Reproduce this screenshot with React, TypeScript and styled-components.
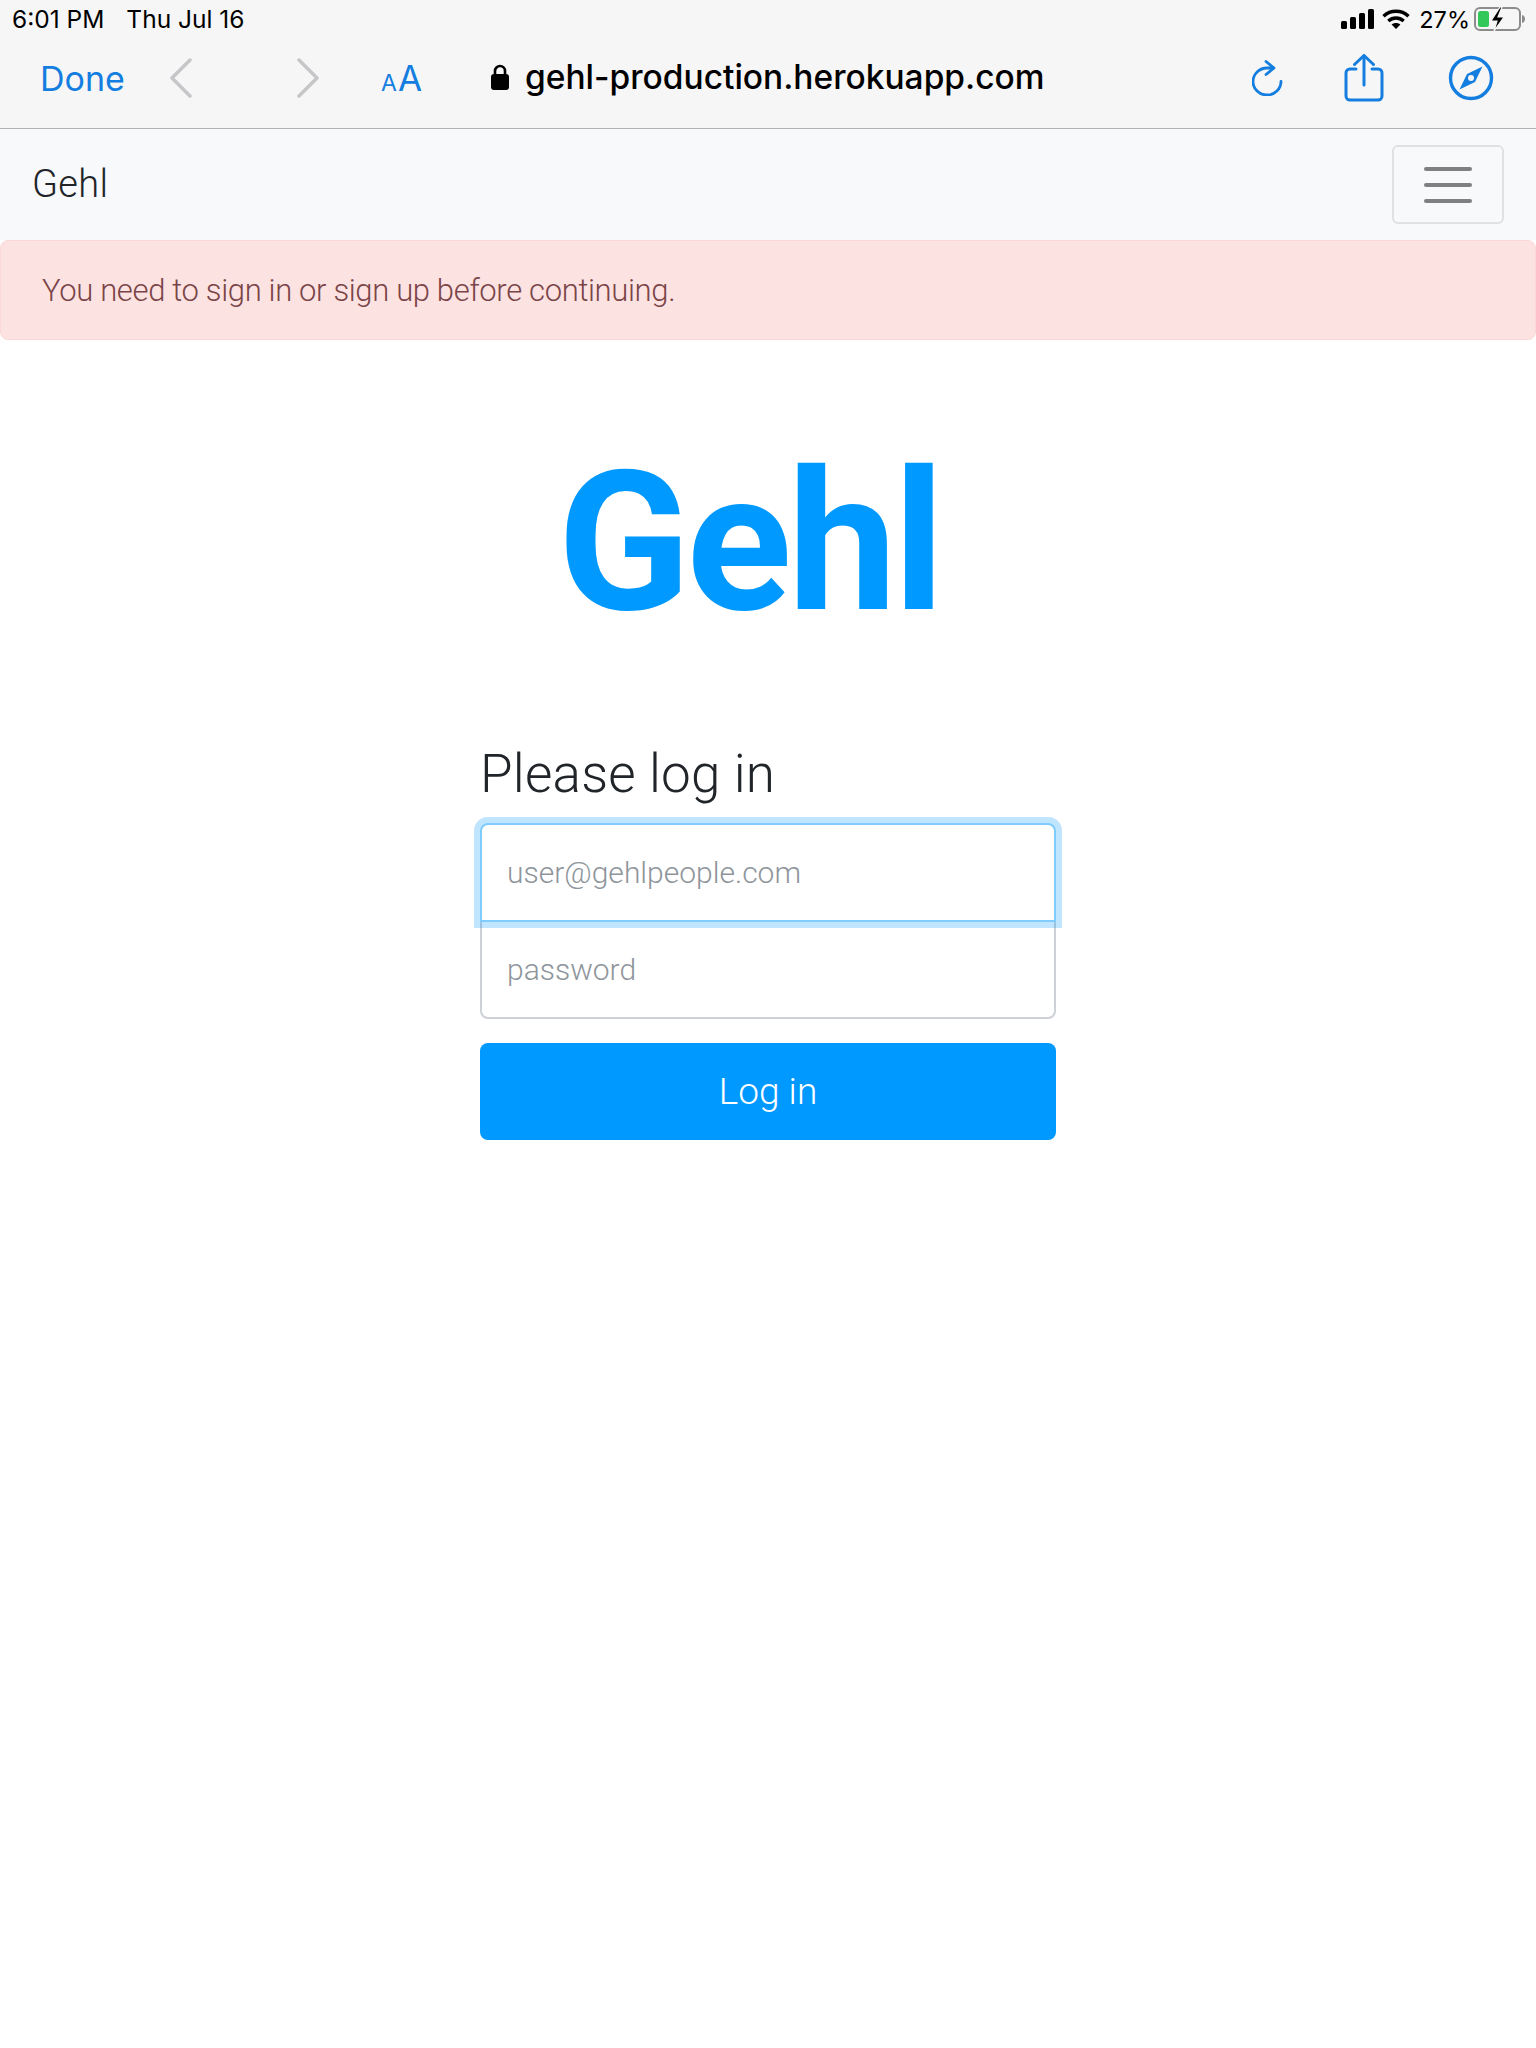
import styled, { createGlobalStyle } from 'styled-components';

const GlobalStyle = createGlobalStyle`
    html, body {
        margin: 0;
        padding: 0;
        background: #fff;
    }

    body {
        font-family: Roboto, "Liberation Sans", sans-serif;
    }

    * {
        box-sizing: border-box;
    }
`;

const BLUE = '#147ee0';

function SignalIcon() {
    return (
        <svg width="33" height="20" viewBox="0 0 33 20">
            <rect x="0" y="12" width="6" height="8" rx="1.5" fill="#000" />
            <rect x="9" y="8" width="6" height="12" rx="1.5" fill="#000" />
            <rect x="18" y="4" width="6" height="16" rx="1.5" fill="#000" />
            <rect x="27" y="0" width="6" height="20" rx="1.5" fill="#000" />
        </svg>
    );
}

function WifiIcon() {
    return (
        <svg width="28" height="20" viewBox="0 0 28 20" fill="none" stroke="#000" strokeWidth="3.4">
            <path d="M1.5 7.2C8.6 .6 19.4 .6 26.5 7.2" />
            <path d="M6.3 12C10.8 8 17.2 8 21.7 12" />
            <path d="M14 20l-4.4-4.6c2.6-2 6.2-2 8.8 0z" fill="#000" stroke="none" />
        </svg>
    );
}

function BatteryIcon() {
    return (
        <svg width="52" height="24" viewBox="0 0 52 24">
            <rect x="1" y="1" width="45" height="22" rx="5" fill="none" stroke="#8c8c8c" strokeWidth="2" />
            <rect x="4" y="4" width="11" height="16" rx="2.5" fill="#34c759" />
            <path d="M48 8c2 .5 3 2 3 4s-1 3.500-3 4z" fill="#8c8c8c" />
            <path d="M26 0l-9 14h6l-3 10 10-14h-6l4-10z" fill="#000" stroke="#f6f6f6" strokeWidth="1.200" />
        </svg>
    );
}

function ChevronIcon({ right }: { right?: boolean }) {
    return (
        <svg width="24" height="40" viewBox="0 0 24 40" fill="none" stroke="#c6c6c8" strokeWidth="3.5" strokeLinecap="round" strokeLinejoin="round">
            <path d={right ? 'M3 2l18 18-18 18' : 'M21 2L3 20l18 18'} />
        </svg>
    );
}

function LockIcon() {
    return (
        <svg width="18" height="26" viewBox="0 0 18 26">
            <path d="M4 11V7a5 5 0 0 1 10 0v4" fill="none" stroke="#000" strokeWidth="2.600" />
            <rect x="0" y="10" width="18" height="16" rx="3" fill="#000" />
        </svg>
    );
}

function ReloadIcon() {
    return (
        <svg width="32" height="36" viewBox="0 0 32 36" fill="none" stroke={BLUE} strokeWidth="2.800" strokeLinecap="round" strokeLinejoin="round">
            <path d="M21 8H15A14 13.500 0 1 0 29 21.500" />
            <path d="M14 1.500l8 6.500-8 6.500" />
        </svg>
    );
}

function ShareIcon() {
    return (
        <svg width="40" height="48" viewBox="0 0 40 48" fill="none" stroke={BLUE} strokeWidth="3" strokeLinecap="round" strokeLinejoin="round">
            <path d="M12 15H6a4 4 0 0 0-4 4v23a4 4 0 0 0 4 4h28a4 4 0 0 0 4-4V19a4 4 0 0 0-4-4h-6" />
            <path d="M20 31V2" />
            <path d="M10.500 10.500L20 1.500l9.500 9" />
        </svg>
    );
}

function CompassIcon() {
    return (
        <svg width="46" height="46" viewBox="0 0 46 46">
            <circle cx="23" cy="23" r="20.500" fill="none" stroke={BLUE} strokeWidth="3.400" />
            <path fillRule="evenodd" d="M34.500 11.500L27 27 11.500 34.500 19 19zM23 20a3 3 0 1 0 0 6 3 3 0 0 0 0-6z" fill={BLUE} />
        </svg>
    );
}

function App() {
    return (
        <Page>
            <GlobalStyle />
            <BrowserChrome>
                <StatusBar>
                    <StatusGroup>
                        <span>6:01 PM</span>
                        <span>Thu Jul 16</span>
                    </StatusGroup>
                    <StatusIcons>
                        <SignalIcon />
                        <WifiIcon />
                        <BatteryPercent>27%</BatteryPercent>
                        <BatteryIcon />
                    </StatusIcons>
                </StatusBar>
                <Toolbar>
                    <DoneLink>Done</DoneLink>
                    <HistoryButtons>
                        <ChevronIcon />
                        <ChevronIcon right />
                    </HistoryButtons>
                    <ReaderButton><small>A</small>A</ReaderButton>
                    <Address>
                        <LockIcon />
                        <span>gehl-production.herokuapp.com</span>
                    </Address>
                    <ToolbarActions>
                        <ReloadIcon />
                        <ShareIcon />
                        <CompassIcon />
                    </ToolbarActions>
                </Toolbar>
            </BrowserChrome>

            <Navbar>
                <Brand>Gehl</Brand>
                <NavToggle aria-label="Toggle navigation">
                    <NavToggleBar />
                    <NavToggleBar />
                    <NavToggleBar />
                </NavToggle>
            </Navbar>

            <Alert>You need to sign in or sign up before continuing.</Alert>

            <LogoRow>
                <Logo>Gehl</Logo>
            </LogoRow>

            <LoginForm onSubmit={(e) => e.preventDefault()}>
                <FormTitle>Please log in</FormTitle>
                <FormInput $focused type="email" placeholder="user@gehlpeople.com" />
                <FormInput type="password" placeholder="password" />
                <SubmitButton type="submit">Log in</SubmitButton>
            </LoginForm>
        </Page>
    );
}

const Page = styled.div`
    min-height: 2048px;
    background: #fff;
`;

const BrowserChrome = styled.header`
    height: 129px;
    background: #f6f6f6;
    border-bottom: 1px solid #b2b2b2;
`;

const StatusBar = styled.div`
    height: 38px;
    padding: 0 10px 0 12px;
    display: flex;
    align-items: center;
    justify-content: space-between;
    font-family: Inter, sans-serif;
    font-size: 24.5px;
    color: #000;
`;

const StatusGroup = styled.div`
    display: flex;
    gap: 22px;
`;

const StatusIcons = styled.div`
    display: flex;
    align-items: center;
    gap: 8px;
`;

const BatteryPercent = styled.span`
    margin-left: 1px;
    margin-right: -4px;
    font-size: 23.5px;
`;

const Toolbar = styled.div`
    height: 80px;
    padding: 0 42px 0 40px;
    display: flex;
    align-items: center;
`;

const DoneLink = styled.span`
    width: 129px;
    font-family: Inter, sans-serif;
    font-size: 34px;
    color: ${BLUE};
`;

const HistoryButtons = styled.div`
    width: 212px;
    display: flex;
    gap: 103px;
`;

const ReaderButton = styled.span`
    width: 110px;
    font-family: Inter, sans-serif;
    font-size: 35px;
    color: ${BLUE};

    small {
        font-size: 23px;
        margin-right: 1px;
    }
`;

const Address = styled.div`
    display: flex;
    align-items: center;
    gap: 16px;
    margin-top: -2px;
    font-family: Inter, sans-serif;
    font-size: 33.5px;
    font-weight: 500;
    color: #000;
`;

const ToolbarActions = styled.div`
    margin-left: auto;
    display: flex;
    align-items: center;
    gap: 60px;

    svg:last-child {
        margin-left: 4px;
    }
`;

const Navbar = styled.nav`
    height: 111px;
    padding: 0 32px;
    background: #f8f9fa;
    display: flex;
    align-items: center;
    justify-content: space-between;
`;

const Brand = styled.span`
    margin-top: -2px;
    font-size: 38px;
    font-weight: 300;
    letter-spacing: 0.3px;
    color: #212529;
`;

const NavToggle = styled.button`
    width: 112px;
    height: 79px;
    padding: 0;
    background: transparent;
    border: 2px solid #e0e1e3;
    border-radius: 6px;
    display: flex;
    flex-direction: column;
    align-items: center;
    justify-content: center;
    gap: 12px;
`;

const NavToggleBar = styled.span`
    width: 48px;
    height: 4px;
    border-radius: 2px;
    background: #808080;
`;

const Alert = styled.div`
    height: 100px;
    padding: 0 41px;
    display: flex;
    align-items: center;
    background: #fde2e2;
    border: 1px solid #fbd9d9;
    border-radius: 8px;
    font-size: 31px;
    font-weight: 300;
    letter-spacing: -0.35px;
    color: #7a4548;
`;

const LogoRow = styled.div`
    margin-top: 108px;
    padding-right: 38px;
    display: flex;
    justify-content: center;
`;

const Logo = styled.span`
    font-family: Roboto, sans-serif;
    font-size: 195px;
    font-weight: 700;
    line-height: 190px;
    letter-spacing: -4px;
    color: #0099ff;
`;

const LoginForm = styled.form`
    width: 576px;
    margin: 105px auto 0;
    display: flex;
    flex-direction: column;
`;

const FormTitle = styled.h1`
    margin: 0 0 18px;
    font-size: 53px;
    font-weight: 300;
    line-height: 62px;
    letter-spacing: 0.2px;
    color: #212529;
`;

const FormInput = styled.input<{ $focused?: boolean }>`
    position: relative;
    z-index: ${({ $focused }) => ($focused ? 1 : 0)};
    height: 99px;
    margin-top: ${({ $focused }) => ($focused ? 0 : '-2px')};
    padding: 0 25px;
    font-family: Roboto, sans-serif;
    font-size: 30px;
    font-weight: 300;
    background: ${({ $focused }) => ($focused ? '#fff' : 'transparent')};
    border: 2px solid ${({ $focused }) => ($focused ? '#80ccff' : '#cdd0d4')};
    border-radius: ${({ $focused }) => ($focused ? '8px 8px 0 0' : '0 0 8px 8px')};
    box-shadow: ${({ $focused }) => ($focused ? '0 0 0 6px rgba(0, 153, 255, 0.25)' : 'none')};
    outline: none;

    &::placeholder {
        color: #8e959b;
        opacity: 1;
    }
`;

const SubmitButton = styled.button`
    height: 97px;
    margin-top: 24px;
    border: none;
    border-radius: 8px;
    background: #0099ff;
    font-family: Roboto, sans-serif;
    font-size: 37px;
    font-weight: 300;
    color: #fff;
`;

export default App;
